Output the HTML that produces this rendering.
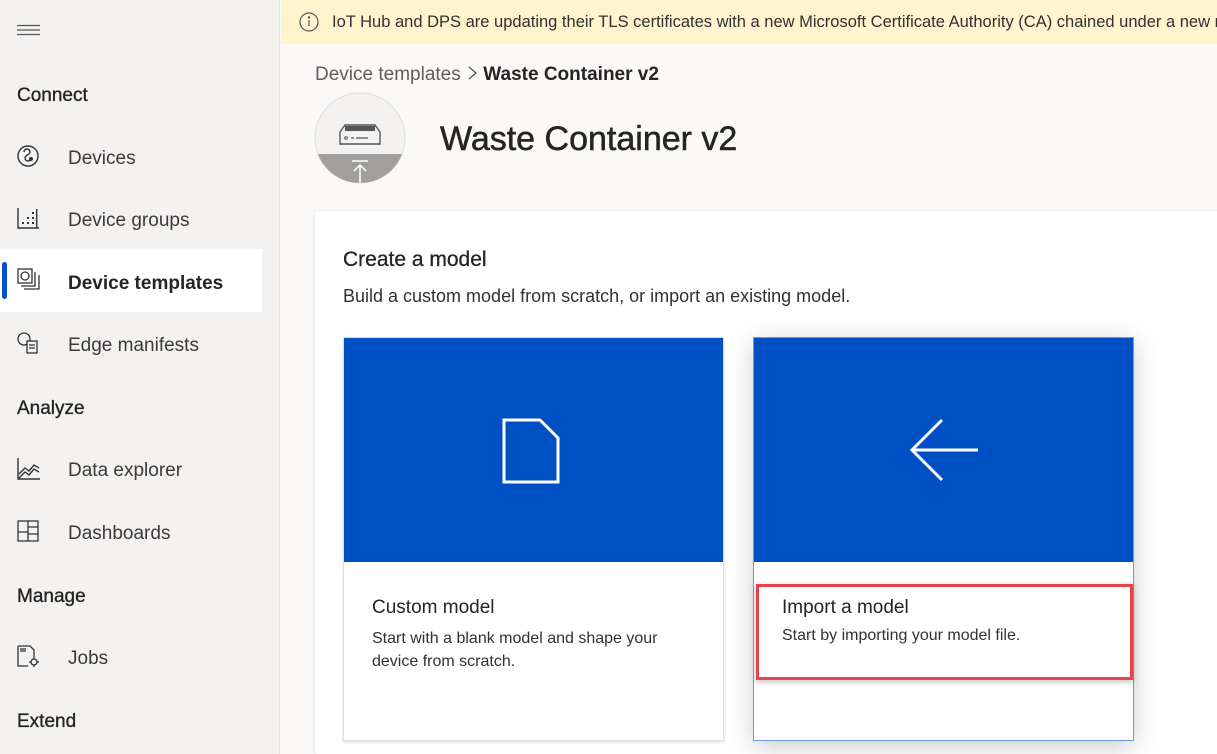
<!DOCTYPE html>
<html style="width:1217px;height:754px;overflow:hidden"><head><style>
*{margin:0;padding:0;box-sizing:border-box}
body{width:1217px;height:754px;overflow:hidden;font-family:"Liberation Sans",sans-serif;background:#faf9f8;position:relative;color:#323130}
.side{position:absolute;left:0;top:0;width:280px;height:754px;background:#f3f2f1;border-right:1px solid #e6e4e2}
.h{position:absolute;left:17px;font-size:19px;color:#252423;-webkit-text-stroke:.35px #252423}
.it{position:absolute;left:68px;font-size:19px;color:#3b3a39}
.ic{position:absolute;left:17px}
.sel{position:absolute;left:0;top:249px;width:262px;height:63px;background:#fff}
.bar{position:absolute;left:2px;top:262px;width:5px;height:37px;background:#0050c8;border-radius:3px}
.banner{position:absolute;left:281px;top:0;right:0;height:44px;background:#fff4ce;font-size:16.5px;color:#323130;white-space:nowrap;overflow:hidden}
.card{position:absolute;background:#fff;border:1px solid #e1dfdd}
.blue{position:absolute;left:0;top:0;right:0;height:224px;background:#0050c5}
</style></head><body>
<div class="side">
<svg style="position:absolute;left:17px;top:24px" width="23" height="12"><path d="M0 1.5h23M0 6h23M0 10.5h23" stroke="#555" stroke-width="1.2"/></svg>
<div class="h" style="top:85px">Connect</div>
<svg class="ic" style="top:145px" width="24" height="24" fill="none" stroke="#333" stroke-width="1.4"><circle cx="11" cy="11" r="10"/><path d="M7 7a3 3 0 0 1 6 0c0 3-5 3-5 6a3 3 0 0 0 6 0"/><circle cx="14" cy="14" r="1.3"/></svg>
<div class="it" style="top:148px">Devices</div>
<svg class="ic" style="top:207px" width="24" height="24" fill="#333"><path d="M1 1v20h21" stroke="#333" stroke-width="1.4" fill="none"/><rect x="5" y="15" width="2" height="2"/><rect x="10" y="15" width="2" height="2"/><rect x="15" y="15" width="2" height="2"/><rect x="10" y="10" width="2" height="2"/><rect x="15" y="10" width="2" height="2"/><rect x="15" y="5" width="2" height="2"/><rect x="19" y="2" width="1.4" height="19"/></svg>
<div class="it" style="top:210px">Device groups</div>
<div class="sel"></div><div class="bar"></div>
<svg class="ic" style="top:268px" width="24" height="24" fill="none" stroke="#333" stroke-width="1.3"><rect x="1" y="1" width="14" height="14"/><path d="M4 18h14V4M7 21h15V7"/><circle cx="8" cy="8" r="4"/></svg>
<div class="it" style="top:273px;font-weight:bold;color:#252423">Device templates</div>
<svg class="ic" style="top:332px" width="24" height="24" fill="none" stroke="#333" stroke-width="1.3"><circle cx="7" cy="7" r="6"/><rect x="10" y="9" width="10" height="12" fill="#f3f2f1"/><path d="M12 13h6M12 16h6"/></svg>
<div class="it" style="top:335px">Edge manifests</div>
<div class="h" style="top:398px">Analyze</div>
<svg class="ic" style="top:457px" width="24" height="24" fill="none" stroke="#333" stroke-width="1.4"><path d="M1 1v21h22M2 17l6-6 4 3 5-6 5 3M2 21l6-6 4 3 5-6 5 3"/></svg>
<div class="it" style="top:460px">Data explorer</div>
<svg class="ic" style="top:520px" width="24" height="24" fill="none" stroke="#333" stroke-width="1.3"><rect x="1" y="1" width="20" height="20"/><path d="M11 1v20M1 12h10M11 7h10M11 14h10"/></svg>
<div class="it" style="top:523px">Dashboards</div>
<div class="h" style="top:586px">Manage</div>
<svg class="ic" style="top:645px" width="24" height="24" fill="none" stroke="#333" stroke-width="1.3"><path d="M1 1h12l4 4v7M1 1v20h10"/><path d="M3 4h6M3 6h6"/><circle cx="17" cy="17" r="3"/><path d="M17 12v2M17 20v2M12 17h2M20 17h2"/></svg>
<div class="it" style="top:648px">Jobs</div>
<div class="h" style="top:711px">Extend</div>
</div>
<div class="banner"><svg style="position:absolute;left:18px;top:12px" width="20" height="20" fill="none" stroke="#555" stroke-width="1.2"><circle cx="10" cy="10" r="9"/><path d="M10 8v6"/><circle cx="10" cy="5.5" r=".6" fill="#555"/></svg><span style="position:absolute;left:51px;top:13px">IoT Hub and DPS are updating their TLS certificates with a new Microsoft Certificate Authority (CA) chained under a new root</span></div>
<div style="position:absolute;left:315px;top:64px;font-size:19px;color:#605e5c">Device templates <svg width="12" height="16" style="vertical-align:-1px"><path d="M3 2l7 6-7 6" fill="none" stroke="#555" stroke-width="1.3"/></svg> <span style="color:#252423;font-weight:bold">Waste Container v2</span></div>
<svg style="position:absolute;left:314px;top:92px" width="92" height="92"><defs><clipPath id="c"><circle cx="46" cy="46" r="45"/></clipPath></defs><circle cx="46" cy="46" r="45" fill="#f3f2f1" stroke="#ddd"/><rect x="0" y="62" width="92" height="30" fill="#a19f9d" clip-path="url(#c)"/><path d="M26 40l5-7h30l5 7v12H26z" fill="none" stroke="#555" stroke-width="1.4"/><path d="M31 34h30v5H31z" fill="#555"/><circle cx="32" cy="46" r="1.3" fill="none" stroke="#555"/><path d="M37 46h3M42 46h12" stroke="#555" stroke-width="1.3"/><path d="M38 69h16M46 73v18M40 79l6-6 6 6" stroke="#fff" stroke-width="1.5" fill="none"/></svg>
<div style="position:absolute;left:440px;top:120px;font-size:34px;color:#252423;-webkit-text-stroke:.5px #252423">Waste Container v2</div>
<div style="position:absolute;left:315px;top:211px;width:910px;height:543px;background:#fff;box-shadow:0 1px 4px rgba(0,0,0,.12);border-radius:2px"></div>
<div style="position:absolute;left:343px;top:248px;font-size:21px;color:#252423;-webkit-text-stroke:.3px #252423">Create a model</div>
<div style="position:absolute;left:343px;top:286px;font-size:18px;color:#323130">Build a custom model from scratch, or import an existing model.</div>
<div class="card" style="left:343px;top:337px;width:381px;height:404px;box-shadow:0 1px 3px rgba(0,0,0,.15)"><div class="blue"></div>
<svg style="position:absolute;left:158px;top:80px" width="60" height="68" fill="none" stroke="#fff" stroke-width="3"><path d="M2 2h36l18 18v44H2z"/></svg>
<div style="position:absolute;left:28px;top:259px;font-size:19px;color:#252423">Custom model</div>
<div style="position:absolute;left:28px;top:289px;font-size:16px;line-height:23px;color:#323130">Start with a blank model and shape your<br>device from scratch.</div></div>
<div class="card" style="left:753px;top:337px;width:381px;height:404px;border-color:#6b9be8;box-shadow:0 6px 24px rgba(0,0,0,.2)"><div class="blue"></div>
<svg style="position:absolute;left:154px;top:78px" width="72" height="68" fill="none" stroke="#fff" stroke-width="3"><path d="M70 34H4M34 4L4 34l30 30"/></svg>
<div style="position:absolute;left:2px;top:246px;width:377px;height:96px;border:3px solid #e8434a;box-shadow:0 2px 6px rgba(0,0,0,.25)"></div>
<div style="position:absolute;left:28px;top:259px;font-size:19px;color:#252423">Import a model</div>
<div style="position:absolute;left:28px;top:289px;font-size:16px;color:#323130">Start by importing your model file.</div></div>
</body></html>
